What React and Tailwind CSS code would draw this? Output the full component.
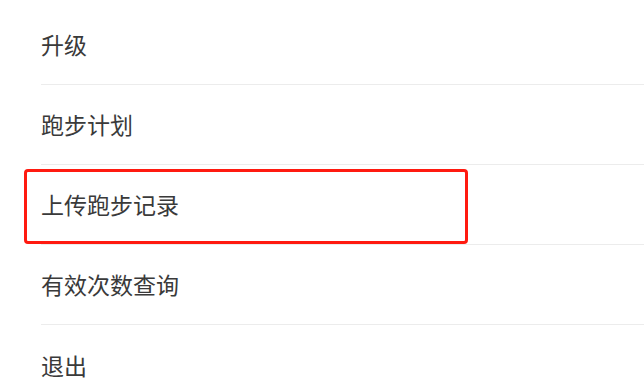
import React from 'react';

const items = ['升级', '跑步计划', '上传跑步记录', '有效次数查询', '退出'];

const MenuRow = ({ label, last }) => (
    <div className={`flex h-[80px] items-center ${last ? '' : 'border-b border-[#ececec]'}`}>
        <span className="text-[23px] leading-none text-[#3a3a3a]">{label}</span>
    </div>
);

export default function App() {
    return (
        <div
            className="relative h-[392px] w-[644px] overflow-hidden bg-white"
            style={{ fontFamily: '"Noto Sans CJK SC", "Noto Sans", sans-serif' }}
        >
            <div className="ml-[41px] mt-[5px]">
                {items.map((label, i) => (
                    <MenuRow key={label} label={label} last={i === items.length - 1} />
                ))}
            </div>
            {/* highlight annotation */}
            <div className="absolute left-[24px] top-[169px] h-[75px] w-[444px] rounded-[4px] border-[3.5px] border-[#ff1a10]" />
        </div>
    );
}
